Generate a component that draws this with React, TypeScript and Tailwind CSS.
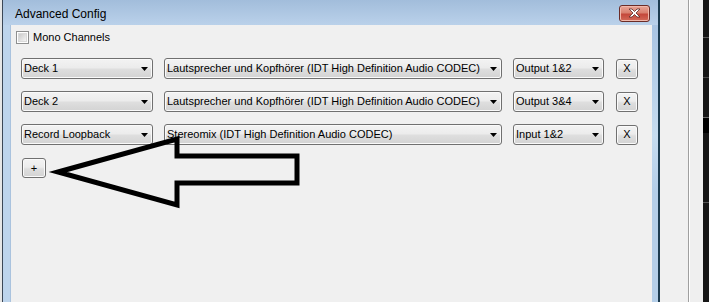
import React from 'react';

const font = { fontFamily: '"Liberation Sans", Arial, sans-serif' };

const grad =
  'bg-[linear-gradient(to_bottom,#f3f3f3_0%,#ececec_45%,#dedede_55%,#d3d3d3_100%)]';

interface ComboProps {
  label: string;
  width: string;
}

// Win7 style combo box
const Combo: React.FC<ComboProps> = ({ label, width }) => (
  <div
    className={`${width} h-[21px] border border-[#707070] rounded-[3px] ${grad} flex items-center justify-between pl-[2px] pr-[4px] shadow-[inset_0_0_0_1px_#fafafa]`}
  >
    <span className="text-[11px] leading-none text-black whitespace-nowrap">{label}</span>
    <svg width="7" height="4" viewBox="0 0 7 4">
      <path d="M0 0h7L3.5 4z" fill="#000" />
    </svg>
  </div>
);

const SmallButton: React.FC<{ label: string; width: string }> = ({ label, width }) => (
  <button
    type="button"
    className={`${width} h-[20px] border border-[#707070] rounded-[3px] ${grad} flex items-center justify-center text-[11px] leading-none text-black shadow-[inset_0_0_0_1px_#fafafa]`}
  >
    {label}
  </button>
);

const rows = [
  { deck: 'Deck 1', device: 'Lautsprecher und Kopfhörer (IDT High Definition Audio CODEC)', ch: 'Output 1&2' },
  { deck: 'Deck 2', device: 'Lautsprecher und Kopfhörer (IDT High Definition Audio CODEC)', ch: 'Output 3&4' },
  { deck: 'Record Loopback', device: 'Stereomix (IDT High Definition Audio CODEC)', ch: 'Input 1&2' },
];

export default function App() {
  return (
    <div className="relative w-[709px] h-[302px] overflow-hidden flex bg-[#f0f0f0]" style={font}>
      {/* desktop strip at left */}
      <div className="w-[2px] bg-[#e6e6e6]" />

      {/* dialog window */}
      <div className="w-[658px] flex flex-col border-l border-l-[#3b4756] border-r-2 border-r-[#1b3a4f]">
        {/* title bar */}
        <div className="h-[25px] flex items-center justify-between pl-[12px] pr-[8px] bg-[linear-gradient(to_bottom,#a2bddb,#bad1ea)]">
          <span className="text-[12px] text-black pt-[2px]">Advanced Config</span>
          <div className="w-[31px] h-[17px] mt-[1px] rounded-[3px] border border-[#6b2c27] bg-[linear-gradient(to_bottom,#e9a597_0%,#d9806f_45%,#c4483b_55%,#d36a59_100%)] flex items-center justify-center shadow-[inset_0_0_0_1px_#f0b8ab]">
            <svg width="13" height="10" viewBox="0 0 13 10">
              <path
                d="M1 1h3l2.5 2.5L9 1h3L8 5l4 4H9L6.5 6.5 4 9H1l4-4z"
                fill="#fff"
                stroke="#5a2a26"
                strokeWidth="0.8"
                strokeLinejoin="round"
              />
            </svg>
          </div>
        </div>

        {/* frame + client */}
        <div className="flex-1 flex">
          <div className="w-[8px] bg-[#bdd4ec] border-r border-r-[#aac3de]" />
          <div className="flex-1 bg-[#f0f0f0] pt-[6px] pl-[5px]">
            <label className="flex items-center gap-[4px] h-[13px]">
              <span className="w-[13px] h-[13px] border border-[#8e8f8f] bg-white flex items-center justify-center">
                <span className="w-[9px] h-[9px] bg-[linear-gradient(135deg,#cbcbcb,#f4f4f4)] border border-[#dadada]" />
              </span>
              <span className="text-[11px] leading-[13px] text-black">Mono Channels</span>
            </label>

            <div className="mt-[14px] pl-[5px] flex flex-col gap-[12px]">
              {rows.map((r) => (
                <div key={r.deck} className="flex items-center">
                  <Combo label={r.deck} width="w-[132px]" />
                  <div className="w-[11px]" />
                  <Combo label={r.device} width="w-[338px]" />
                  <div className="w-[11px]" />
                  <Combo label={r.ch} width="w-[91px]" />
                  <div className="w-[12px]" />
                  <SmallButton label="X" width="w-[22px]" />
                </div>
              ))}
            </div>

            <div className="mt-[13px] pl-[6px]">
              <SmallButton label="+" width="w-[24px]" />
            </div>
          </div>
          <div className="w-[6px] bg-[linear-gradient(to_bottom,#a9c4e2,#c6dcf0_40%,#b4cee8_60%,#b4cee8)]" />
        </div>
      </div>

      {/* gap between windows */}
      <div className="w-[28px] bg-[#f0f0f0]" />
      <div className="w-[1px] bg-[#9f9f9f]" />
      <div className="w-[1px] bg-[#ffffff]" />
      <div className="w-[13px] bg-[#efefef]" />

      {/* dark app at right edge */}
      <div className="w-[6px] flex flex-col bg-[#161616]">
        <div className="h-[38px] border-b border-b-[#5a5a5a]" />
        <div className="h-[40px] border-b border-b-[#4a4a4a]" />
        <div className="h-[40px] border-b border-b-[#6a6a6a]" />
        <div className="h-[15px] bg-black" />
        <div className="h-[70px] border-b border-b-[#555]" />
      </div>

      {/* annotation arrow drawn on top */}
      <svg className="absolute left-0 top-0 pointer-events-none" width="709" height="302" viewBox="0 0 709 302">
        <polygon
          points="58,172 177,139 177,156 297,156 297,183 177,183 177,205"
          fill="none"
          stroke="#000"
          strokeWidth="5"
          strokeLinejoin="miter"
        />
      </svg>
    </div>
  );
}
